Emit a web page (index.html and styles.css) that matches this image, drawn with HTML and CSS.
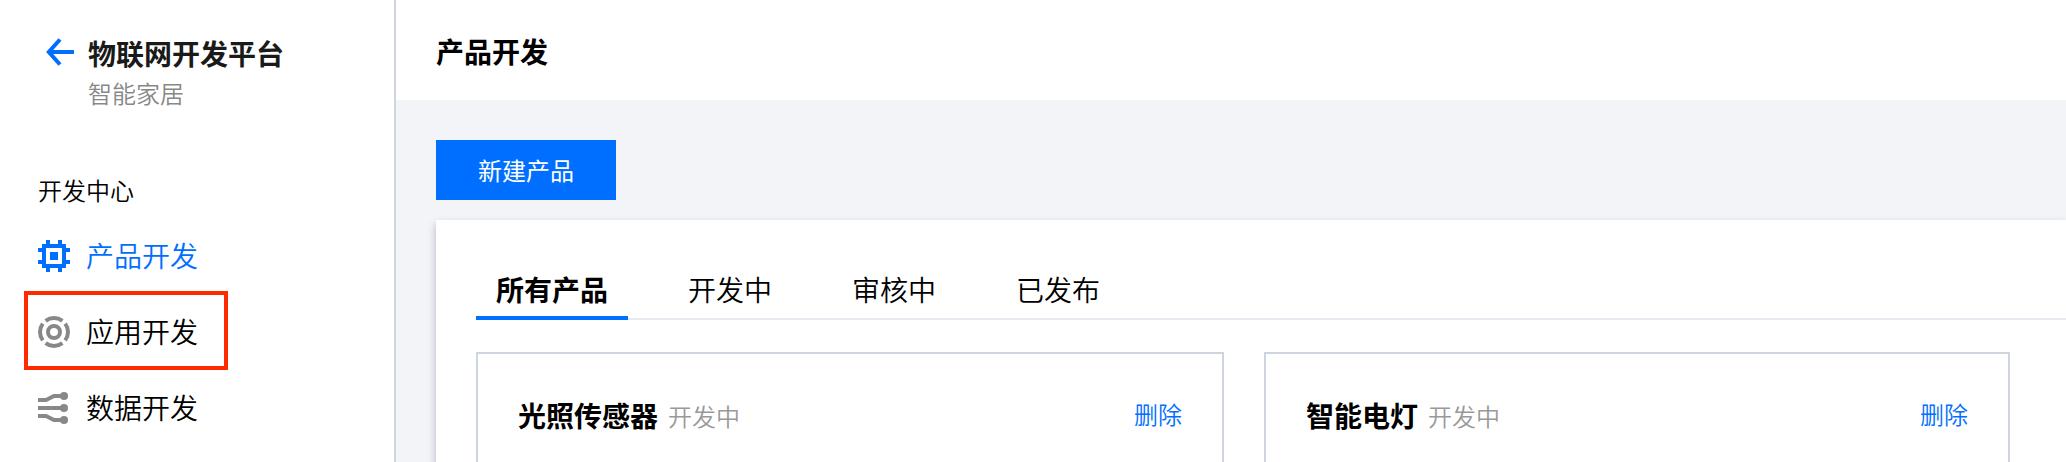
FILE: index.html
```html
<!DOCTYPE html>
<html lang="zh-CN">
<head>
<meta charset="utf-8">
<title>产品开发</title>
<link rel="stylesheet" href="styles.css">
</head>
<body>
<div class="app">
  <aside class="sidebar">
    <div class="brand">
      <svg class="back" width="28" height="28" viewBox="0 0 28 28"><path d="M28 14H3.500M14 1.500L2.800 14L14 26.500" fill="none" stroke="#006eff" stroke-width="4"/></svg>
      <div>
        <h1 class="brand-name">物联网开发平台</h1>
        <p class="brand-sub">智能家居</p>
      </div>
    </div>
    <div class="group">开发中心</div>
    <nav class="nav">
      <a class="nav-item active">
        <svg width="32" height="32" viewBox="0 0 32 32" fill="#006eff" shape-rendering="crispEdges"><path fill-rule="evenodd" d="M4 4h4V0h4v4h8V0h4v4h4v4h4v4h-4v8h4v4h-4v4h-4v4h-4v-4h-8v4H8v-4H4v-4H0v-4h4v-8H0V8h4zM8 8v16h16V8z"/><path d="M12 12h8v8h-8z"/></svg>
        <span class="nav-label">产品开发</span>
      </a>
      <a class="nav-item marked">
        <svg width="32" height="32" viewBox="0 0 32 32" fill="none" stroke="#888" stroke-width="4"><circle cx="16" cy="16" r="6"/><path d="M7.600 4.800A14 14 0 0 1 24.400 4.800M27.200 7.600A14 14 0 0 1 27.200 24.400M24.400 27.200A14 14 0 0 1 7.600 27.200M4.800 24.400A14 14 0 0 1 4.800 7.600"/></svg>
        <span class="nav-label">应用开发</span>
      </a>
      <a class="nav-item">
        <svg width="32" height="32" viewBox="0 0 32 32"><path d="M0 8H8L16 4H26M0 16H26M0 24H8L16 28H26" fill="none" stroke="#888" stroke-width="4"/><g fill="#888"><circle cx="26" cy="4" r="4"/><circle cx="26" cy="16" r="4"/><circle cx="26" cy="28" r="4"/></g></svg>
        <span class="nav-label">数据开发</span>
      </a>
    </nav>
  </aside>
  <main class="main">
    <header class="header"><h2 class="page-title">产品开发</h2></header>
    <div class="content">
      <button class="create">新建产品</button>
      <section class="panel">
        <div class="tabs">
          <a class="tab selected">所有产品</a>
          <a class="tab">开发中</a>
          <a class="tab">审核中</a>
          <a class="tab">已发布</a>
        </div>
        <div class="cards">
          <article class="card">
            <h3 class="card-title">光照传感器</h3>
            <span class="status">开发中</span>
            <a class="delete">删除</a>
          </article>
          <article class="card">
            <h3 class="card-title">智能电灯</h3>
            <span class="status">开发中</span>
            <a class="delete">删除</a>
          </article>
        </div>
      </section>
    </div>
  </main>
</div>
</body>
</html>
```
FILE: styles.css
```css
* { box-sizing: border-box; }
body, h1, h2, h3, p { margin: 0; }
body {
  font-family: "Noto Sans CJK SC", sans-serif;
  font-size: 28px;
  line-height: 40px;
  font-weight: 350;
  color: #000;
  background: #fff;
}
h1, h2, h3 { font-size: 28px; font-weight: 700; }
svg { display: block; flex: none; }
.app { display: flex; height: 462px; overflow: hidden; }

.sidebar { width: 396px; flex: none; border-right: 2px solid #cfd5de; }
.brand { display: flex; gap: 14px; padding: 33px 0 0 46px; }
.back { margin-top: 5px; }
.brand-name { color: #1a1a1a; }
.brand-sub { font-size: 24px; color: #888; }
.group { margin: 57px 0 0 38px; font-size: 24px; }
.nav { padding-top: 8px; }
.nav-item { display: flex; align-items: center; gap: 16px; height: 76px; padding-left: 38px; }
.nav-label { padding-bottom: 2px; }
.nav-item.active { color: #006eff; }
.nav-item.marked {
  width: 204px;
  height: 79px;
  margin: -3px 0 0 24px;
  padding: 3px 0 0 10px;
  border: 4px solid #ff2a00;
}

.main { flex: 1; min-width: 0; background: #f2f4f8; }
.header { height: 100px; padding: 31px 40px; background: #fff; }
.content { padding: 40px 0 0 40px; }
.create {
  display: block;
  width: 180px;
  height: 60px;
  padding: 0;
  border: 0;
  background: #006eff;
  color: #fff;
  font: 400 24px/60px "Noto Sans CJK SC", sans-serif;
}
.panel {
  height: 300px;
  margin-top: 20px;
  padding: 40px 0 0 40px;
  background: #fff;
  box-shadow: 0 4px 8px rgba(54, 58, 80, .32);
}
.tabs { display: flex; gap: 40px; height: 60px; border-bottom: 2px solid #e5eaf0; }
.tab { height: 60px; padding: 9px 20px; }
.tab.selected { font-weight: 700; border-bottom: 4px solid #006eff; }
.cards { display: flex; gap: 40px; margin-top: 32px; }
.card {
  display: flex;
  align-items: flex-start;
  width: 748px;
  height: 240px;
  padding: 41px 40px;
  border: 2px solid #cfd5de;
}
.card + .card { width: 746px; }
.status { margin: 1px 0 0 10px; font-size: 24px; color: #999; }
.delete { margin: -1px 0 0 auto; font-size: 24px; color: #006eff; }
```
